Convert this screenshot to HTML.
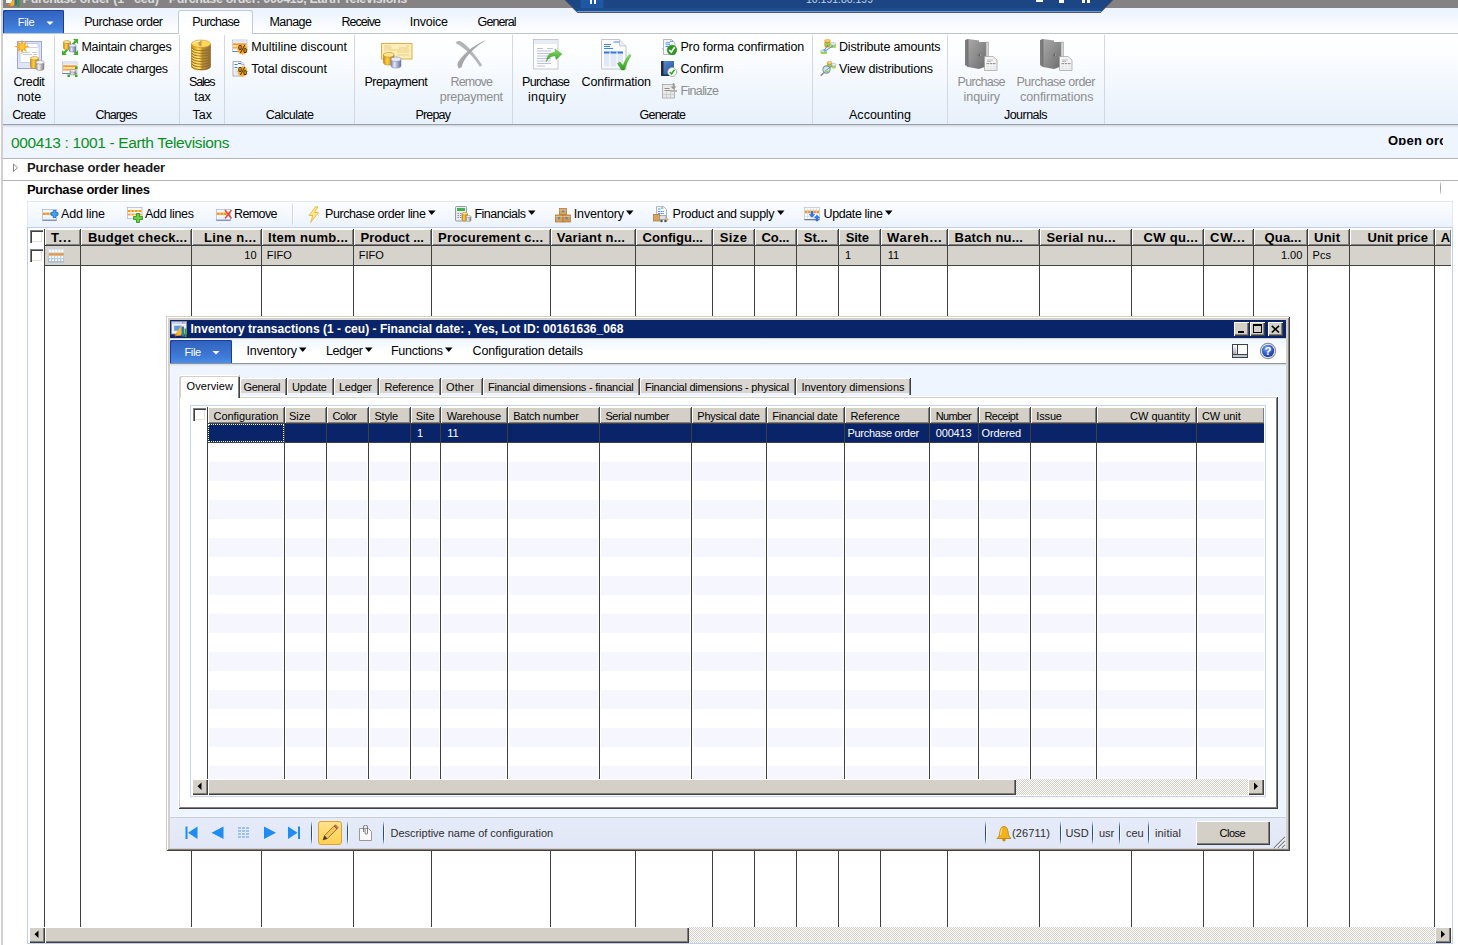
<!DOCTYPE html>
<html><head><meta charset="utf-8"><title>Purchase order</title>
<style>
html,body{margin:0;padding:0;background:#fff;}
body{width:1458px;height:945px;overflow:hidden;font-family:"Liberation Sans",sans-serif;}
#root{position:relative;width:1458px;height:945px;overflow:hidden;background:#fff;}
#root div,#root span.t,#root svg{position:absolute;}
span.t{white-space:nowrap;display:block;}
.clip{overflow:hidden;}
.hc{background:#d4d0c8;box-shadow:inset 1px 1px 0 #fff, inset -1px -1px 0 #808080;}
.chk{background:#fff;box-shadow:inset 1px 1px 0 #808080, inset 2px 2px 0 #404040, inset -1px -1px 0 #fff, inset -2px -2px 0 #e6e3dd;}
.dither{background:repeating-conic-gradient(#ffffff 0% 25%, #d4d0c8 0% 50%) 0 0/2px 2px;}
.sbtn{background:#d4d0c8;box-shadow:inset 1px 1px 0 #fff, inset -1px -1px 0 #404040, inset -2px -2px 0 #808080;}

</style></head>
<body>
<div id="root">
<div style="left:0px;top:0px;width:1458px;height:8px;background:#858283;"></div>
<div class="clip" style="left:0;top:0;width:560px;height:8px;">
<span id="t0" class="t" style="left:22.6px;top:-8.9px;height:16.5px;line-height:16.5px;font-size:12.5px;font-weight:700;color:#dcdcdc;letter-spacing:-0.3px;">Purchase order (1 - ceu) - Purchase order: 000413, Earth Televisions</span>
</div>
<div style="left:6px;top:0px;width:6px;height:3px;background:#f4f6fa;"></div>
<svg style="left:7px;top:0" width="13" height="8"><polygon points="1,6 3,3 6,0 8,0 8,5 3,6.500" fill="#f4b21a"/><polygon points="1,6.500 4,4 3,6.800" fill="#e8481a"/><rect x="7.500" y="0" width="2.500" height="5.500" fill="#2a6ab0"/><rect x="10.500" y="0" width="2" height="7" fill="#3f962a"/></svg>
<div style="left:0px;top:8px;width:1458px;height:26px;background:linear-gradient(#eaf2fd 0%,#f6faff 55%,#ffffff 100%);"></div>
<div style="left:0px;top:34px;width:1458px;height:90px;background:linear-gradient(#ffffff 0%,#fbfdff 25%,#f0f6fd 65%,#e7f0fb 100%);"></div>
<div style="left:0px;top:33px;width:1458px;height:1px;background:#bcc4d0;"></div>
<div style="left:0px;top:124px;width:1458px;height:1px;background:#9aa0a8;"></div>
<div style="left:0px;top:125px;width:1458px;height:3px;background:linear-gradient(#cfd5dd,#e6ecf5 60%,#eef5fe);"></div>
<div style="left:0px;top:0px;width:1px;height:945px;background:#fff;"></div>
<div style="left:1px;top:0px;width:2px;height:945px;background:#d1d0ce;"></div>
<svg style="left:560px;top:0" width="560" height="14" viewBox="0 0 560 14"><polygon points="4.500,0 553.500,0 540.500,13 17.500,13" fill="#55555a"/><polygon points="5.500,0 552.500,0 540.500,12 17.500,12" fill="#1b4683"/><polygon points="14,8 544,8 541,11 17,11" fill="#1e4c8c"/><rect x="21" y="0" width="22" height="7.500" fill="#1d56a2" stroke="#2a62ae" stroke-width=".6"/><polygon points="16.500,11 541.500,11 540.500,12 17.500,12" fill="#6a9cdc"/></svg>
<div class="clip" style="left:560px;top:0;width:560px;height:12px;">
<span id="t1" class="t" style="left:246px;top:-7.8px;height:14.5px;line-height:14.5px;font-size:10.5px;font-weight:400;color:#c4d2e8;letter-spacing:-0.01px;">10.191.80.199</span>
</div>
<div style="left:590px;top:0px;width:2px;height:4px;background:#fff;"></div>
<div style="left:594px;top:0px;width:2px;height:4px;background:#fff;"></div>
<div style="left:1036px;top:0px;width:7px;height:2px;background:#fff;"></div>
<div style="left:1059px;top:0px;width:5px;height:3px;background:#fff;"></div>
<div style="left:1082px;top:0px;width:3px;height:3px;background:#fff;"></div>
<div style="left:1087px;top:0px;width:3px;height:3px;background:#fff;"></div>
<div style="left:3px;top:10px;width:61px;height:23px;border-radius:2px 2px 0 0;background:linear-gradient(#2f62bf 0%,#3a70cc 45%,#3f7cd8 75%,#4a8ee8 100%);box-shadow:inset 1px 1px 0 0 #1a3c9e, inset -1px 0 0 0 #1a3c9e;"></div>
<span id="t2" class="t" style="left:17.8px;top:14.7px;height:15px;line-height:15px;font-size:11px;font-weight:400;color:#fff;letter-spacing:-0.34px;">File</span>
<svg style="left:44px;top:20px" width="12" height="6"><polygon points="2.5,1.5 9.5,1.5 6,5" fill="#fff"/></svg>
<div style="left:178px;top:10px;width:75px;height:24px;background:linear-gradient(#fafcff,#ffffff);border:1px solid #c3cad5;border-bottom:none;border-radius:3px 3px 0 0;box-sizing:border-box;"></div>
<span id="t3" class="t" style="left:84.3px;top:14.1px;height:16.5px;line-height:16.5px;font-size:12.5px;font-weight:400;color:#000;letter-spacing:-0.52px;">Purchase order</span>
<span id="t4" class="t" style="left:192.3px;top:14.1px;height:16.5px;line-height:16.5px;font-size:12.5px;font-weight:400;color:#000;letter-spacing:-0.73px;">Purchase</span>
<span id="t5" class="t" style="left:269.4px;top:14.1px;height:16.5px;line-height:16.5px;font-size:12.5px;font-weight:400;color:#000;letter-spacing:-0.52px;">Manage</span>
<span id="t6" class="t" style="left:341.4px;top:14.1px;height:16.5px;line-height:16.5px;font-size:12.5px;font-weight:400;color:#000;letter-spacing:-0.93px;">Receive</span>
<span id="t7" class="t" style="left:409.7px;top:14.1px;height:16.5px;line-height:16.5px;font-size:12.5px;font-weight:400;color:#000;letter-spacing:-0.22px;">Invoice</span>
<span id="t8" class="t" style="left:477.6px;top:14.1px;height:16.5px;line-height:16.5px;font-size:12.5px;font-weight:400;color:#000;letter-spacing:-0.93px;">General</span>
<div style="left:54px;top:35px;width:1px;height:89px;background:#d3d8e0;"></div>
<div style="left:179px;top:35px;width:1px;height:89px;background:#d3d8e0;"></div>
<div style="left:224px;top:35px;width:1px;height:89px;background:#d3d8e0;"></div>
<div style="left:354px;top:35px;width:1px;height:89px;background:#d3d8e0;"></div>
<div style="left:512px;top:35px;width:1px;height:89px;background:#d3d8e0;"></div>
<div style="left:812px;top:35px;width:1px;height:89px;background:#d3d8e0;"></div>
<div style="left:947px;top:35px;width:1px;height:89px;background:#d3d8e0;"></div>
<div style="left:1104px;top:35px;width:1px;height:89px;background:#d3d8e0;"></div>
<span id="t9" class="t" style="left:12.3px;top:106.8px;height:16.5px;line-height:16.5px;font-size:12.5px;font-weight:400;color:#000;letter-spacing:-0.77px;">Create</span>
<span id="t10" class="t" style="left:95.5px;top:106.8px;height:16.5px;line-height:16.5px;font-size:12.5px;font-weight:400;color:#000;letter-spacing:-0.89px;">Charges</span>
<span id="t11" class="t" style="left:192.6px;top:106.8px;height:16.5px;line-height:16.5px;font-size:12.5px;font-weight:400;color:#000;letter-spacing:0px;">Tax</span>
<span id="t12" class="t" style="left:265.7px;top:106.8px;height:16.5px;line-height:16.5px;font-size:12.5px;font-weight:400;color:#000;letter-spacing:-0.48px;">Calculate</span>
<span id="t13" class="t" style="left:415.5px;top:106.8px;height:16.5px;line-height:16.5px;font-size:12.5px;font-weight:400;color:#000;letter-spacing:-0.82px;">Prepay</span>
<span id="t14" class="t" style="left:639.6px;top:106.8px;height:16.5px;line-height:16.5px;font-size:12.5px;font-weight:400;color:#000;letter-spacing:-0.82px;">Generate</span>
<span id="t15" class="t" style="left:849px;top:106.8px;height:16.5px;line-height:16.5px;font-size:12.5px;font-weight:400;color:#000;letter-spacing:0.02px;">Accounting</span>
<span id="t16" class="t" style="left:1004px;top:106.8px;height:16.5px;line-height:16.5px;font-size:12.5px;font-weight:400;color:#000;letter-spacing:-0.54px;">Journals</span>
<span id="t17" class="t" style="left:13.5px;top:73.8px;height:16.5px;line-height:16.5px;font-size:12.5px;font-weight:400;color:#000;letter-spacing:-0.41px;">Credit</span>
<span id="t18" class="t" style="left:16.9px;top:88.8px;height:16.5px;line-height:16.5px;font-size:12.5px;font-weight:400;color:#000;letter-spacing:0px;">note</span>
<span id="t19" class="t" style="left:189px;top:73.8px;height:16.5px;line-height:16.5px;font-size:12.5px;font-weight:400;color:#000;letter-spacing:-1.2px;">Sales</span>
<span id="t20" class="t" style="left:194.2px;top:88.8px;height:16.5px;line-height:16.5px;font-size:12.5px;font-weight:400;color:#000;letter-spacing:0px;">tax</span>
<span id="t21" class="t" style="left:364.4px;top:73.8px;height:16.5px;line-height:16.5px;font-size:12.5px;font-weight:400;color:#000;letter-spacing:-0.45px;">Prepayment</span>
<span id="t22" class="t" style="left:450.5px;top:73.8px;height:16.5px;line-height:16.5px;font-size:12.5px;font-weight:400;color:#8d8d8d;letter-spacing:-0.81px;">Remove</span>
<span id="t23" class="t" style="left:439.8px;top:88.8px;height:16.5px;line-height:16.5px;font-size:12.5px;font-weight:400;color:#8d8d8d;letter-spacing:-0.31px;">prepayment</span>
<span id="t24" class="t" style="left:522px;top:73.8px;height:16.5px;line-height:16.5px;font-size:12.5px;font-weight:400;color:#000;letter-spacing:-0.69px;">Purchase</span>
<span id="t25" class="t" style="left:528px;top:88.8px;height:16.5px;line-height:16.5px;font-size:12.5px;font-weight:400;color:#000;letter-spacing:0.2px;">inquiry</span>
<span id="t26" class="t" style="left:581.5px;top:73.8px;height:16.5px;line-height:16.5px;font-size:12.5px;font-weight:400;color:#000;letter-spacing:-0.12px;">Confirmation</span>
<span id="t27" class="t" style="left:957.5px;top:73.8px;height:16.5px;line-height:16.5px;font-size:12.5px;font-weight:400;color:#8d8d8d;letter-spacing:-0.69px;">Purchase</span>
<span id="t28" class="t" style="left:963.5px;top:88.8px;height:16.5px;line-height:16.5px;font-size:12.5px;font-weight:400;color:#8d8d8d;letter-spacing:-0.05px;">inquiry</span>
<span id="t29" class="t" style="left:1016.5px;top:73.8px;height:16.5px;line-height:16.5px;font-size:12.5px;font-weight:400;color:#8d8d8d;letter-spacing:-0.5px;">Purchase order</span>
<span id="t30" class="t" style="left:1020px;top:88.8px;height:16.5px;line-height:16.5px;font-size:12.5px;font-weight:400;color:#8d8d8d;letter-spacing:-0.07px;">confirmations</span>
<span id="t31" class="t" style="left:81.5px;top:38.8px;height:16.5px;line-height:16.5px;font-size:12.5px;font-weight:400;color:#000;letter-spacing:-0.33px;">Maintain charges</span>
<span id="t32" class="t" style="left:81.5px;top:60.8px;height:16.5px;line-height:16.5px;font-size:12.5px;font-weight:400;color:#000;letter-spacing:-0.39px;">Allocate charges</span>
<span id="t33" class="t" style="left:251.3px;top:38.8px;height:16.5px;line-height:16.5px;font-size:12.5px;font-weight:400;color:#000;letter-spacing:-0.01px;">Multiline discount</span>
<span id="t34" class="t" style="left:251.3px;top:60.8px;height:16.5px;line-height:16.5px;font-size:12.5px;font-weight:400;color:#000;letter-spacing:-0.06px;">Total discount</span>
<span id="t35" class="t" style="left:680.4px;top:38.8px;height:16.5px;line-height:16.5px;font-size:12.5px;font-weight:400;color:#000;letter-spacing:-0.12px;">Pro forma confirmation</span>
<span id="t36" class="t" style="left:680.4px;top:60.8px;height:16.5px;line-height:16.5px;font-size:12.5px;font-weight:400;color:#000;letter-spacing:-0.09px;">Confirm</span>
<span id="t37" class="t" style="left:680.4px;top:82.8px;height:16.5px;line-height:16.5px;font-size:12.5px;font-weight:400;color:#8d8d8d;letter-spacing:-0.64px;">Finalize</span>
<span id="t38" class="t" style="left:839px;top:38.8px;height:16.5px;line-height:16.5px;font-size:12.5px;font-weight:400;color:#000;letter-spacing:-0.16px;">Distribute amounts</span>
<span id="t39" class="t" style="left:839px;top:60.8px;height:16.5px;line-height:16.5px;font-size:12.5px;font-weight:400;color:#000;letter-spacing:-0.18px;">View distributions</span>
<svg width="0" height="0" style="left:0;top:0"><defs>
<linearGradient id="gold" x1="0" x2="1" y1="0" y2="0"><stop offset="0" stop-color="#c98a14"/><stop offset=".35" stop-color="#ffd24a"/><stop offset=".6" stop-color="#e9a820"/><stop offset="1" stop-color="#a8781c"/></linearGradient>
<linearGradient id="silv" x1="0" x2="1" y1="0" y2="0"><stop offset="0" stop-color="#9a9a9a"/><stop offset=".35" stop-color="#f2f2f2"/><stop offset=".7" stop-color="#b0b0b0"/><stop offset="1" stop-color="#7e7e7e"/></linearGradient>
<linearGradient id="silvb" x1="0" x2="1" y1="0" y2="0"><stop offset="0" stop-color="#8088b0"/><stop offset=".35" stop-color="#e4e8f6"/><stop offset=".7" stop-color="#9aa2c8"/><stop offset="1" stop-color="#6a72a0"/></linearGradient>
<linearGradient id="grn" x1="0" x2="0" y1="0" y2="1"><stop offset="0" stop-color="#8be06a"/><stop offset="1" stop-color="#2f9a1a"/></linearGradient>
<linearGradient id="bk" x1="0" x2="1" y1="0" y2="1"><stop offset="0" stop-color="#a9a9a9"/><stop offset=".5" stop-color="#8c8c8c"/><stop offset="1" stop-color="#6b6b6b"/></linearGradient>
<linearGradient id="bluebk" x1="0" x2="1" y1="0" y2="1"><stop offset="0" stop-color="#5b8fd6"/><stop offset="1" stop-color="#1f4f90"/></linearGradient>
<radialGradient id="helpg" cx=".4" cy=".3" r=".8"><stop offset="0" stop-color="#7ea6ee"/><stop offset=".6" stop-color="#2b56c4"/><stop offset="1" stop-color="#16348c"/></radialGradient>
</defs></svg>
<svg style="left:13px;top:38px" width="34" height="34" viewBox="0 0 34 34"><rect x="4.500" y="3.500" width="24" height="27" fill="#dfe4f7" stroke="#9aa6d8"/><rect x="7" y="6" width="19" height="18.500" fill="#fff" stroke="#aeb7e0" stroke-width=".6"/><rect x="14.500" y="5.500" width="10.500" height="4" fill="#fff" stroke="#aeb7e0" stroke-width=".6"/><path d="M10 14.500h7M19 14.500h5M10 16.500h9M20 16.500h4" stroke="#b8bcd0" stroke-width=".8"/><g fill="#f6a81c"><polygon points="9,1 10.3,6 14,3 12.2,7.6 17,8.5 12.2,10 14,14.5 10.3,11.5 9,17 7.7,11.5 3.5,14.5 5.8,10 1,8.5 5.8,7.6 3.5,3 7.7,6"/></g><circle cx="9" cy="8.6" r="2.6" fill="#ffc93a"/><path d="M17.5,20.26 v8.48 a4.0,1.76 0 0 0 8,0 v-8.48 z" fill="url(#gold)" stroke="#a8781c" stroke-width=".5"/><ellipse cx="21.5" cy="20.26" rx="4.0" ry="1.76" fill="#ffe58a" stroke="#a8781c" stroke-width=".5"/><path d="M23,24.26 v6.48 a4.0,1.76 0 0 0 8,0 v-6.48 z" fill="url(#silv)" stroke="#8a8a8a" stroke-width=".5"/><ellipse cx="27.0" cy="24.26" rx="4.0" ry="1.76" fill="#f4f4f4" stroke="#8a8a8a" stroke-width=".5"/></svg>
<svg style="left:62px;top:39px" width="16" height="16" viewBox="0 0 16 16"><g fill="#3fae2a"><polygon points="16,0 16,5 14.3,3.3 11.5,6 10,4.5 12.7,1.7 11,0"/><polygon points="0,16 0,11 1.7,12.7 4.5,10 6,11.5 3.3,14.3 5,16"/><polygon points="16,16 11,16 12.7,14.3 10,11.5 11.5,10 14.3,12.7 16,11"/></g><path d="M1.5,3.04 v5.92 a3.5,1.54 0 0 0 7,0 v-5.92 z" fill="url(#gold)" stroke="#a8781c" stroke-width=".5"/><ellipse cx="5.0" cy="3.04" rx="3.5" ry="1.54" fill="#ffe58a" stroke="#a8781c" stroke-width=".5"/><path d="M7,6.54 v4.92 a3.5,1.54 0 0 0 7,0 v-4.92 z" fill="url(#silvb)" stroke="#7078a4" stroke-width=".5"/><ellipse cx="10.5" cy="6.54" rx="3.5" ry="1.54" fill="#e8ebf8" stroke="#7078a4" stroke-width=".5"/></svg>
<svg style="left:62px;top:61px" width="16" height="16" viewBox="0 0 16 16"><rect x=".5" y="1" width="14.5" height="11.5" fill="#f4f6fc" stroke="#9fb0d4" stroke-width=".6"/><rect x="1" y="1.3" width="13.5" height="2.2" fill="#dfe6f6"/><rect x="1" y="4.3" width="13.5" height="2" fill="#f79a1a"/><rect x="1" y="7.6" width="13.5" height="2" fill="#f9a93a"/><rect x=".5" y="12" width="14.5" height="1" fill="#6f86b8"/><path d="M8,9.82 v2.86 a3.0,1.32 0 0 0 6,0 v-2.86 z" fill="url(#silv)" stroke="#808080" stroke-width=".5"/><ellipse cx="11.0" cy="9.82" rx="3.0" ry="1.32" fill="#f0f0f0" stroke="#808080" stroke-width=".5"/><g fill="#33b022"><rect x="13" y="5.5" width="2.5" height="2.5"/><rect x="5.5" y="13.5" width="2.5" height="2.5"/><rect x="13" y="13.5" width="2.5" height="2.5"/></g></svg>
<svg style="left:191px;top:39px" width="20" height="33" viewBox="0 0 20 33"><path d="M0.5,5 v22.500 a9.500,3.600 0 0 0 19,0 v-22.500 z" fill="url(#gold)" stroke="#9b6c14" stroke-width=".5"/><path d="M0.600,8.5 a9.400,3.200 0 0 0 18.800,0" fill="none" stroke="#8a5e10" stroke-width=".9" opacity=".8"/><path d="M1.200,10.0 a9.400,3.200 0 0 0 8,2.900" fill="none" stroke="#fff0a0" stroke-width=".9" opacity=".9"/><path d="M0.600,11.2 a9.400,3.200 0 0 0 18.800,0" fill="none" stroke="#8a5e10" stroke-width=".9" opacity=".8"/><path d="M1.200,12.7 a9.400,3.200 0 0 0 8,2.900" fill="none" stroke="#fff0a0" stroke-width=".9" opacity=".9"/><path d="M0.600,13.9 a9.400,3.200 0 0 0 18.800,0" fill="none" stroke="#8a5e10" stroke-width=".9" opacity=".8"/><path d="M1.200,15.4 a9.400,3.200 0 0 0 8,2.900" fill="none" stroke="#fff0a0" stroke-width=".9" opacity=".9"/><path d="M0.600,16.6 a9.400,3.200 0 0 0 18.800,0" fill="none" stroke="#8a5e10" stroke-width=".9" opacity=".8"/><path d="M1.200,18.1 a9.400,3.200 0 0 0 8,2.900" fill="none" stroke="#fff0a0" stroke-width=".9" opacity=".9"/><path d="M0.600,19.3 a9.400,3.200 0 0 0 18.800,0" fill="none" stroke="#8a5e10" stroke-width=".9" opacity=".8"/><path d="M1.200,20.8 a9.400,3.200 0 0 0 8,2.900" fill="none" stroke="#fff0a0" stroke-width=".9" opacity=".9"/><path d="M0.600,22.0 a9.400,3.200 0 0 0 18.800,0" fill="none" stroke="#8a5e10" stroke-width=".9" opacity=".8"/><path d="M1.200,23.5 a9.400,3.200 0 0 0 8,2.900" fill="none" stroke="#fff0a0" stroke-width=".9" opacity=".9"/><path d="M0.600,24.700000000000003 a9.400,3.200 0 0 0 18.800,0" fill="none" stroke="#8a5e10" stroke-width=".9" opacity=".8"/><path d="M1.200,26.200000000000003 a9.400,3.200 0 0 0 8,2.900" fill="none" stroke="#fff0a0" stroke-width=".9" opacity=".9"/><path d="M0.600,27.400000000000002 a9.400,3.200 0 0 0 18.800,0" fill="none" stroke="#8a5e10" stroke-width=".9" opacity=".8"/><path d="M1.200,28.900000000000002 a9.400,3.200 0 0 0 8,2.900" fill="none" stroke="#fff0a0" stroke-width=".9" opacity=".9"/><path d="M10.500,8 v22.900 a9.500,3.600 0 0 0 9,-3.400 v-22 z" fill="#7a6a58" opacity=".42"/><ellipse cx="10" cy="4.800" rx="9.500" ry="3.800" fill="#ffd65a" stroke="#b8861c" stroke-width=".5"/><path d="M7.500,3 l3,-1.500 v6 l-3,-1.500z" fill="#a89060" opacity=".8"/><path d="M2,4.500 a8,2.800 0 0 1 7,-2.500" stroke="#fff4c0" stroke-width="1" fill="none"/></svg>
<svg style="left:232px;top:39px" width="17" height="17" viewBox="0 0 17 17"><rect x=".5" y="1" width="14.5" height="11.5" fill="#f4f6fc" stroke="#9fb0d4" stroke-width=".6"/><rect x="1" y="1.3" width="13.5" height="2.2" fill="#dfe6f6"/><rect x="1" y="4.3" width="13.5" height="2" fill="#f79a1a"/><rect x="1" y="7.6" width="13.5" height="2" fill="#f9a93a"/><rect x=".5" y="12" width="14.5" height="1" fill="#6f86b8"/><polygon points="16.3,10.5 14.5,11.6 15.5,13.4 13.5,13.5 13.4,15.5 11.6,14.5 10.5,16.3 9.4,14.5 7.6,15.5 7.5,13.5 5.5,13.4 6.5,11.6 4.7,10.5 6.5,9.4 5.5,7.6 7.5,7.5 7.6,5.5 9.4,6.5 10.5,4.7 11.6,6.5 13.4,5.5 13.5,7.5 15.5,7.6 14.5,9.4" fill="#fbab24"/><text x="10.5" y="14.0" font-size="10" font-weight="400" text-anchor="middle" font-family="Liberation Sans, sans-serif" fill="#000">%</text></svg>
<svg style="left:232px;top:61px" width="17" height="17" viewBox="0 0 17 17"><path d="M1,.5 h8 l3,3 v11.5 h-11 z" fill="#fbfbfd" stroke="#8a8a92" stroke-width=".7"/><path d="M9,.5 v3 h3" fill="#e8e8ee" stroke="#8a8a92" stroke-width=".5"/><path d="M2.5 3.5h3M6 2.5h3M2.5 6.5h3" stroke="#2f7fe0" stroke-width="1"/><rect x="2.5" y="8" width="4" height="5.5" fill="#dfe6f6"/><polygon points="16.3,10.5 14.5,11.6 15.5,13.4 13.5,13.5 13.4,15.5 11.6,14.5 10.5,16.3 9.4,14.5 7.6,15.5 7.5,13.5 5.5,13.4 6.5,11.6 4.7,10.5 6.5,9.4 5.5,7.6 7.5,7.5 7.6,5.5 9.4,6.5 10.5,4.7 11.6,6.5 13.4,5.5 13.5,7.5 15.5,7.6 14.5,9.4" fill="#fbab24"/><text x="10.5" y="14.0" font-size="10" font-weight="400" text-anchor="middle" font-family="Liberation Sans, sans-serif" fill="#000">%</text></svg>
<svg style="left:381px;top:43px" width="32" height="26" viewBox="0 0 32 26"><rect x=".5" y=".5" width="30.5" height="15.5" fill="#fdeeb8" stroke="#dcae4e"/><path d="M3 3h7M25 3h3M3 5h8M18 5h10M3 7h3M7 7h14M22 7h6M16 9h12M16 12h12" stroke="#d9b96a" stroke-width=".6"/><path d="M2.5,11.81 v7.88 a5.25,2.31 0 0 0 10.5,0 v-7.88 z" fill="url(#gold)" stroke="#a8781c" stroke-width=".5"/><ellipse cx="7.75" cy="11.81" rx="5.25" ry="2.31" fill="#ffe58a" stroke="#a8781c" stroke-width=".5"/><path d="M10,16.2 v6.6 a5.0,2.2 0 0 0 10,0 v-6.6 z" fill="url(#silvb)" stroke="#7078a4" stroke-width=".5"/><ellipse cx="15.0" cy="16.2" rx="5.0" ry="2.2" fill="#e8ebf8" stroke="#7078a4" stroke-width=".5"/></svg>
<svg style="left:455px;top:39.5px" width="32" height="29" viewBox="0 0 32 29"><path d="M0.5,3 C2,1 4,0.5 6,1.5 C12,5 20,14 27,25 L25,27 C19,17 10,8 0.5,3 Z" fill="#b5b5b5"/><path d="M31,0.3 C22,3 10,12 3,22 C2,25 2.5,27 4,28.5 L7,27 C7,22 16,9 31,0.3 Z" fill="#a8a8a8"/></svg>
<svg style="left:533px;top:39px" width="30" height="31" viewBox="0 0 30 31"><rect x=".5" y=".5" width="24.5" height="29.5" fill="#fdfdfe" stroke="#b9bcc6" stroke-width=".8"/><rect x="1" y="1" width="23.5" height="4" fill="#e6ebf8"/><path d="M4 9.5h6M14 9.5h6M4 12h14M4 14.500h14M4 17h14M4 19.500h14M4 22h14M4 24.5h14M4 27h8" stroke="#aab4dc" stroke-width=".8"/><path d="M13.5,22.500 C14,16 17,13.500 22,13.500 L22,10 L29,15 L23,20.500 L22.500,17 C18,17 15.500,18.500 13.500,22.500 Z" fill="url(#grn)" stroke="#3a9a26" stroke-width=".4"/></svg>
<svg style="left:601px;top:39px" width="31" height="32" viewBox="0 0 31 32"><path d="M.5,.5 h18 l6.500,6.500 v23 h-24.500 z" fill="#fbfbfd" stroke="#b4b6be" stroke-width=".8"/><path d="M18.500,.5 v6.500 h6.500" fill="#ececf2" stroke="#b4b6be" stroke-width=".6"/><path d="M12.5 3h6M3 5.500h7M3 7.500h6M3 9.500h9" stroke="#3f86e6" stroke-width="1"/><rect x="3" y="12.500" width="19" height="15" fill="#e2e8f8"/><rect x="3" y="12.500" width="19" height="2" fill="#2f7ae0"/><path d="M9 12.500v15M16 12.500v15" stroke="#fff" stroke-width="1"/><path d="M16.500,24.500 l2.500,-1.500 l3,3.500 c2,-5 4,-8.500 6.500,-11 l1.500,1 c-3,4.500 -5,9 -6.500,14.500 l-3,0 z" fill="url(#grn)" stroke="#2e9a1a" stroke-width=".4"/></svg>
<svg style="left:662px;top:39px" width="16" height="17" viewBox="0 0 16 17"><path d="M1.500,.5 h8 l3.500,3.500 v11.500 h-11.500 z" fill="#f8f8fb" stroke="#9a9aa4" stroke-width=".7"/><path d="M0,9 l1.500,2" stroke="#9a9aa4" stroke-width=".6"/><path d="M4 3.500h4M8 2.300h3M4 5.500h4M3.500 7.500h3" stroke="#4a90ea" stroke-width="1.100"/><ellipse cx="5.500" cy="4.500" rx="2.500" ry="2" fill="#9cc4f4" opacity=".7"/><circle cx="10" cy="11" r="4.800" fill="#2c9a1c" stroke="#1e7a12" stroke-width=".5"/><path d="M7.300,11 l2,2.300 l3.300,-5" stroke="#fff" stroke-width="1.600" fill="none"/></svg>
<svg style="left:661px;top:61px" width="17" height="17" viewBox="0 0 17 17"><rect x="0" y="0" width="13" height="15" fill="url(#bluebk)"/><rect x="0" y="0" width="2.500" height="15" fill="#2a2a2e"/><rect x="0" y="13.500" width="13" height="1.500" fill="#16325e"/><circle cx="11.200" cy="11" r="4.500" fill="#fff" stroke="#9a9a9a" stroke-width=".8"/><path d="M8.800,11 l1.800,2 l2.800,-4.300" stroke="#2fae1c" stroke-width="1.600" fill="none"/></svg>
<svg style="left:662px;top:83px" width="16" height="17" viewBox="0 0 16 17"><rect x=".5" y="1.500" width="12" height="13.500" fill="#e9e9e9" stroke="#a6a6a6" stroke-width=".8"/><path d="M2.500 5.500h5M2.500 7.500h9" stroke="#8e8e8e" stroke-width="1"/><path d="M4.500 9v6M8.500 9v6M.5 11.500h12" stroke="#c2c2c2" stroke-width=".7"/><path d="M11.500,0 v5" stroke="#9a9a9a" stroke-width="1.500"/><polygon points="8.500,3.500 14.500,3.500 11.500,6.500" fill="#9a9a9a"/><rect x="8" y="7" width="7" height="1.800" fill="#b0b0b0"/></svg>
<svg style="left:820px;top:39px" width="17" height="16" viewBox="0 0 17 16"><rect x="4.5" y="1.5" width="6" height="7" rx="1.500" fill="#e79a1e"/><ellipse cx="7.5" cy="1.8" rx="3.0" ry="1.400" fill="#ffd070" stroke="#b87812" stroke-width=".4"/><rect x="4.500" y="4" width="6" height="2.500" fill="#8fd24a"/><rect x="10.5" y="4.5" width="5.5" height="4.5" rx="1.500" fill="#a4d860"/><ellipse cx="13.25" cy="4.8" rx="2.75" ry="1.400" fill="#ececf4" stroke="#8a8aa0" stroke-width=".4"/><rect x="0.5" y="11.5" width="6.5" height="3.5" rx="1.500" fill="#98d456"/><ellipse cx="3.75" cy="11.8" rx="3.25" ry="1.400" fill="#e6ece0" stroke="#8aa070" stroke-width=".4"/><path d="M3.500,12 L8,6 M4,12.500 L13,7" stroke="#2f8fe6" stroke-width=".9"/></svg>
<svg style="left:820px;top:61px" width="17" height="16" viewBox="0 0 17 16"><rect x="7" y="1.5" width="5" height="5" rx="1.500" fill="#e79a1e"/><ellipse cx="9.5" cy="1.8" rx="2.5" ry="1.400" fill="#ffd070" stroke="#b87812" stroke-width=".4"/><rect x="7" y="3.500" width="5" height="2" fill="#8fd24a"/><rect x="11.5" y="3.5" width="4.5" height="4" rx="1.500" fill="#a4d860"/><ellipse cx="13.75" cy="3.8" rx="2.25" ry="1.400" fill="#ececf4" stroke="#8a8aa0" stroke-width=".4"/><circle cx="6.500" cy="8.500" r="3.600" fill="#cfe6f6" stroke="#8a8e96" stroke-width="1.100"/><path d="M4,11.500 L0.800,14.800" stroke="#8a8a8a" stroke-width="1.600"/><path d="M5,10 L12,5" stroke="#2f8fe6" stroke-width=".7"/><rect x="4.500" y="9.500" width="4" height="1.500" fill="#9ad060"/></svg>
<svg style="left:964.5px;top:39px" width="33" height="32" viewBox="0 0 33 32"><path d="M0,1 L3,0 L3,28 L0,26 Z" fill="#7c7c7c"/><path d="M3,0 L14,1.500 L14,3 L21,3 L21,27.500 L14,30 L3,28 Z" fill="url(#bk)"/><path d="M21,3 h2.500 v22 l-2.500,2.500z" fill="#d6d6d6" stroke="#909090" stroke-width=".5"/><path d="M3,0v28" stroke="#6a6a6a" stroke-width=".7"/><circle cx="15" cy="16" r="2" fill="#9a9a9a" stroke="#6e6e6e" stroke-width=".6"/><path d="M13,16 l2,-1.500v3z" fill="#5e5e5e"/><path d="M19.500,17.500 h8.500 l4,3.500 v10.500 h-12.500 z" fill="#f3f3f3" stroke="#9c9c9c" stroke-width=".7"/><path d="M22 21h6M22 22.500h4" stroke="#a6a6a6" stroke-width=".7"/><rect x="21.500" y="24" width="9" height="6.500" fill="#e4e4e4"/><path d="M21.500 24.500h9" stroke="#9a9a9a" stroke-width="1"/><path d="M24.500 24v6.500M27.500 24v6.500M21.500 26.500h9M21.500 28.500h9" stroke="#fafafa" stroke-width=".6"/></svg>
<svg style="left:1040px;top:39px" width="33" height="32" viewBox="0 0 33 32"><path d="M0,1 L3,0 L3,28 L0,26 Z" fill="#7c7c7c"/><path d="M3,0 L14,1.500 L14,3 L21,3 L21,27.500 L14,30 L3,28 Z" fill="url(#bk)"/><path d="M21,3 h2.500 v22 l-2.500,2.500z" fill="#d6d6d6" stroke="#909090" stroke-width=".5"/><path d="M3,0v28" stroke="#6a6a6a" stroke-width=".7"/><circle cx="15" cy="16" r="2" fill="#9a9a9a" stroke="#6e6e6e" stroke-width=".6"/><path d="M13,16 l2,-1.500v3z" fill="#5e5e5e"/><path d="M19.500,17.500 h8.500 l4,3.500 v10.500 h-12.500 z" fill="#f3f3f3" stroke="#9c9c9c" stroke-width=".7"/><path d="M22 21h6M22 22.500h4" stroke="#a6a6a6" stroke-width=".7"/><rect x="21.500" y="24" width="9" height="6.500" fill="#e4e4e4"/><path d="M21.500 24.500h9" stroke="#9a9a9a" stroke-width="1"/><path d="M24.500 24v6.500M27.500 24v6.500M21.500 26.500h9M21.500 28.500h9" stroke="#fafafa" stroke-width=".6"/></svg>
<div style="left:3px;top:128px;width:1455px;height:30px;background:#eef5fe;"></div>
<div style="left:3px;top:158px;width:1455px;height:1px;background:#b4b4b4;"></div>
<span id="t40" class="t" style="left:11px;top:132.8px;height:19.5px;line-height:19.5px;font-size:15.5px;font-weight:400;color:#0a8f1c;letter-spacing:-0.35px;">000413 : 1001 - Earth Televisions</span>
<div class="clip" style="left:1380px;top:129px;width:63px;height:16px;">
<span id="t41" class="t" style="left:8px;top:3.0px;height:17px;line-height:17px;font-size:13px;font-weight:700;color:#000;letter-spacing:0.2px;">Open orc</span>
</div>
<svg style="left:12px;top:162px" width="8" height="12"><polygon points="1.500,2 5.500,5.750 1.500,9.500" fill="#fff" stroke="#8a8a8a" stroke-width="1"/></svg>
<span id="t42" class="t" style="left:27px;top:159.0px;height:17px;line-height:17px;font-size:13px;font-weight:700;color:#1a1a1a;letter-spacing:-0.18px;">Purchase order header</span>
<div style="left:3px;top:180px;width:1455px;height:1px;background:#b4b4b4;"></div>
<span id="t43" class="t" style="left:27px;top:181.0px;height:17px;line-height:17px;font-size:13px;font-weight:700;color:#000;letter-spacing:-0.3px;">Purchase order lines</span>
<div style="left:1440px;top:182px;width:1px;height:12px;background:linear-gradient(#d8d8d8,#9a9a9a 50%,#d8d8d8);"></div>
<div style="left:27px;top:201px;width:1426px;height:27px;background:linear-gradient(#fbfdff,#f4f8fe 55%,#ebf2fd);border:1px solid #dfe8f7;box-sizing:border-box;"></div>
<div style="left:292px;top:204px;width:1px;height:21px;background:#d0d8e6;"></div>
<div style="left:293px;top:204px;width:1px;height:21px;background:#fff;"></div>
<span id="t44" class="t" style="left:61px;top:205.8px;height:16.5px;line-height:16.5px;font-size:12.5px;font-weight:400;color:#000;letter-spacing:-0.17px;">Add line</span>
<span id="t45" class="t" style="left:145px;top:205.8px;height:16.5px;line-height:16.5px;font-size:12.5px;font-weight:400;color:#000;letter-spacing:-0.3px;">Add lines</span>
<span id="t46" class="t" style="left:234px;top:205.8px;height:16.5px;line-height:16.5px;font-size:12.5px;font-weight:400;color:#000;letter-spacing:-0.61px;">Remove</span>
<span id="t47" class="t" style="left:325px;top:205.8px;height:16.5px;line-height:16.5px;font-size:12.5px;font-weight:400;color:#000;letter-spacing:-0.42px;">Purchase order line</span>
<span id="t48" class="t" style="left:474.5px;top:205.8px;height:16.5px;line-height:16.5px;font-size:12.5px;font-weight:400;color:#000;letter-spacing:-0.53px;">Financials</span>
<span id="t49" class="t" style="left:573.8px;top:205.8px;height:16.5px;line-height:16.5px;font-size:12.5px;font-weight:400;color:#000;letter-spacing:-0.15px;">Inventory</span>
<span id="t50" class="t" style="left:672.6px;top:205.8px;height:16.5px;line-height:16.5px;font-size:12.5px;font-weight:400;color:#000;letter-spacing:-0.3px;">Product and supply</span>
<span id="t51" class="t" style="left:823.5px;top:205.8px;height:16.5px;line-height:16.5px;font-size:12.5px;font-weight:400;color:#000;letter-spacing:-0.38px;">Update line</span>
<svg style="left:427.5px;top:210px" width="8" height="6"><polygon points="0,.5 7.500,.5 3.750,5" fill="#000"/></svg>
<svg style="left:527.5px;top:210px" width="8" height="6"><polygon points="0,.5 7.500,.5 3.750,5" fill="#000"/></svg>
<svg style="left:626px;top:210px" width="8" height="6"><polygon points="0,.5 7.500,.5 3.750,5" fill="#000"/></svg>
<svg style="left:776.5px;top:210px" width="8" height="6"><polygon points="0,.5 7.500,.5 3.750,5" fill="#000"/></svg>
<svg style="left:885px;top:210px" width="8" height="6"><polygon points="0,.5 7.500,.5 3.750,5" fill="#000"/></svg>
<svg style="left:42px;top:208.5px" width="17" height="13" viewBox="0 0 17 13"><rect x=".5" y=".5" width="14" height="11" fill="#fbfcff" stroke="#a9b8dc" stroke-width=".8"/><rect x="1" y="3.500" width="13" height="2.500" fill="#f79a1a"/><path d="M4 .5v11M7.500 .5v11M11 .5v11M.5 8.500h14" stroke="#dfe5f4" stroke-width=".6"/><rect x=".5" y="10.500" width="14" height="1.500" fill="#7f93c4"/><path d="M11.200 1.500h2.600v2.200h2.200v2.600h-2.200v2.200h-2.600v-2.200h-2.200v-2.600h2.200z" fill="#3fa8f4" stroke="#1a6fd0" stroke-width=".9" stroke-linejoin="round"/></svg>
<svg style="left:126.5px;top:206.5px" width="17" height="17" viewBox="0 0 17 17"><rect x=".5" y=".5" width="14.500" height="11" fill="#fbfcff" stroke="#a9b8dc" stroke-width=".8"/><rect x="1" y="3" width="13.500" height="2" fill="#f79a1a"/><rect x="1" y="6.500" width="13.500" height="2" fill="#f9a93a"/><path d="M4 .5v11M7.500 .5v11M11 .5v11" stroke="#eef2fb" stroke-width=".7"/><path d="M9.500 6.500h3v3h3v3h-3v3h-3v-3h-3v-3h3z" fill="#6bd048" stroke="#2a8a16" stroke-width=".8"/></svg>
<svg style="left:215.5px;top:208.5px" width="17" height="13" viewBox="0 0 17 13"><rect x=".5" y=".5" width="14" height="11" fill="#fbfcff" stroke="#a9b8dc" stroke-width=".8"/><rect x="1" y="3.500" width="13" height="2.500" fill="#f79a1a"/><path d="M4 .5v11M7.500 .5v11M11 .5v11M.5 8.500h14" stroke="#dfe5f4" stroke-width=".6"/><rect x=".5" y="10.500" width="14" height="1.500" fill="#7f93c4"/><path d="M9,1 L15.500,9.500 M15.500,1 L9,9.500" stroke="#e4483a" stroke-width="1.400"/></svg>
<svg style="left:307px;top:205.5px" width="14" height="18" viewBox="0 0 14 18"><path d="M8.500,.8 L2,9.500 L6,9.500 L3.500,16.500 L11.500,6.500 L7.500,6.500 L11,.8 Z" fill="#ffe88e" stroke="#e4ae2a" stroke-width=".8"/></svg>
<svg style="left:455px;top:206px" width="17" height="17" viewBox="0 0 17 17"><rect x=".5" y=".5" width="11" height="14.500" rx="1" fill="#e8eaee" stroke="#7e8694" stroke-width=".8"/><rect x="2" y="2" width="8" height="3" fill="#46b052"/><path d="M2.500 7.500h7M2.500 9.500h7M2.500 11.500h7" stroke="#8a92a0" stroke-width="1.200" stroke-dasharray="1.500,1"/><path d="M7,7.71 v6.08 a2.75,1.21 0 0 0 5.5,0 v-6.08 z" fill="url(#gold)" stroke="#a8781c" stroke-width=".5"/><ellipse cx="9.75" cy="7.71" rx="2.75" ry="1.21" fill="#ffe58a" stroke="#a8781c" stroke-width=".5"/><path d="M11,10.6 v3.8 a2.5,1.1 0 0 0 5,0 v-3.8 z" fill="url(#silv)" stroke="#808080" stroke-width=".5"/><ellipse cx="13.5" cy="10.6" rx="2.5" ry="1.1" fill="#f0f0f0" stroke="#808080" stroke-width=".5"/></svg>
<svg style="left:555px;top:207.5px" width="17" height="16" viewBox="0 0 17 16"><rect x="4.500" y=".5" width="7" height="6.500" fill="#d9a35c" stroke="#a8722e" stroke-width=".7"/><rect x=".5" y="7" width="7.500" height="7" fill="#d9a35c" stroke="#a8722e" stroke-width=".7"/><rect x="8" y="7" width="7.500" height="7" fill="#cf9a54" stroke="#a8722e" stroke-width=".7"/><rect x="7" y="2" width="2.200" height="2.200" fill="#5a86d8"/><rect x="3" y="9" width="2.200" height="2.200" fill="#5a86d8"/><rect x="10.500" y="9" width="2.200" height="2.200" fill="#5a86d8"/><path d="M4.500 2h7M.5 8.500h15" stroke="#e8c48a" stroke-width=".8"/></svg>
<svg style="left:653px;top:206px" width="17" height="17" viewBox="0 0 17 17"><path d="M3.500,.5 h7 l3,3 v9 h-10 z" fill="#f8f8fb" stroke="#9a9aa4" stroke-width=".7"/><path d="M5 3h3M8 2h3M5 5.500h6M5 7.500h6" stroke="#4a90ea" stroke-width="1" stroke-dasharray="2,.6"/><rect x=".5" y="8.500" width="6" height="6.500" fill="#d9a35c" stroke="#a8722e" stroke-width=".7"/><rect x="6.500" y="9.500" width="6.500" height="4" fill="#dcdfe6" stroke="#7e8694" stroke-width=".6"/><circle cx="8.500" cy="15" r="1.300" fill="#555"/><circle cx="12.500" cy="15" r="1.300" fill="#555"/><circle cx="14.500" cy="13.500" r="1" fill="#e8a21a"/></svg>
<svg style="left:804px;top:207px" width="17" height="16" viewBox="0 0 17 16"><rect x=".5" y=".5" width="15" height="12" fill="#fcfdff" stroke="#b4bed8" stroke-width=".7"/><rect x="1" y="3.500" width="14" height="2.500" fill="#f79a1a"/><path d="M3.500 .5v12M6.500 .5v12M9.500 .5v12M12.500 .5v12M.5 3h15M.5 6.500h15M.5 9.500h15" stroke="#d4dae8" stroke-width=".7"/><rect x=".5" y="12" width="15" height="1.300" fill="#66789c"/><path d="M7,4.500 v3 h-1.800 l2.800,3 l2.800,-3 h-1.800 v-3 z" fill="#2f7fe0" stroke="#1a56b0" stroke-width=".4"/><path d="M12,14 v-3 h-1.800 l2.800,-3 l2.800,3 h-1.800 v3 z" fill="#2f7fe0" stroke="#1a56b0" stroke-width=".4"/></svg>
<div style="left:27px;top:227px;width:1426px;height:717px;border:1px solid #bfd0ec;box-sizing:border-box;background:#fff;"></div>
<div style="left:44px;top:229px;width:1407px;height:17px;background:#d6d3cd;"></div>
<div style="left:45px;top:229px;width:35px;height:16px;background:#d6d3cd;box-shadow:inset 1px 1px 0 #fff, inset -1px -1px 0 #808080;"></div>
<div style="left:81px;top:229px;width:110px;height:16px;background:#d6d3cd;box-shadow:inset 1px 1px 0 #fff, inset -1px -1px 0 #808080;"></div>
<div style="left:192px;top:229px;width:69px;height:16px;background:#d6d3cd;box-shadow:inset 1px 1px 0 #fff, inset -1px -1px 0 #808080;"></div>
<div style="left:262px;top:229px;width:91px;height:16px;background:#d6d3cd;box-shadow:inset 1px 1px 0 #fff, inset -1px -1px 0 #808080;"></div>
<div style="left:354px;top:229px;width:77px;height:16px;background:#d6d3cd;box-shadow:inset 1px 1px 0 #fff, inset -1px -1px 0 #808080;"></div>
<div style="left:432px;top:229px;width:118px;height:16px;background:#d6d3cd;box-shadow:inset 1px 1px 0 #fff, inset -1px -1px 0 #808080;"></div>
<div style="left:551px;top:229px;width:84px;height:16px;background:#d6d3cd;box-shadow:inset 1px 1px 0 #fff, inset -1px -1px 0 #808080;"></div>
<div style="left:636px;top:229px;width:76px;height:16px;background:#d6d3cd;box-shadow:inset 1px 1px 0 #fff, inset -1px -1px 0 #808080;"></div>
<div style="left:713px;top:229px;width:41px;height:16px;background:#d6d3cd;box-shadow:inset 1px 1px 0 #fff, inset -1px -1px 0 #808080;"></div>
<div style="left:755px;top:229px;width:41px;height:16px;background:#d6d3cd;box-shadow:inset 1px 1px 0 #fff, inset -1px -1px 0 #808080;"></div>
<div style="left:797px;top:229px;width:41px;height:16px;background:#d6d3cd;box-shadow:inset 1px 1px 0 #fff, inset -1px -1px 0 #808080;"></div>
<div style="left:839px;top:229px;width:41px;height:16px;background:#d6d3cd;box-shadow:inset 1px 1px 0 #fff, inset -1px -1px 0 #808080;"></div>
<div style="left:881px;top:229px;width:66px;height:16px;background:#d6d3cd;box-shadow:inset 1px 1px 0 #fff, inset -1px -1px 0 #808080;"></div>
<div style="left:948px;top:229px;width:91px;height:16px;background:#d6d3cd;box-shadow:inset 1px 1px 0 #fff, inset -1px -1px 0 #808080;"></div>
<div style="left:1040px;top:229px;width:91px;height:16px;background:#d6d3cd;box-shadow:inset 1px 1px 0 #fff, inset -1px -1px 0 #808080;"></div>
<div style="left:1132px;top:229px;width:71px;height:16px;background:#d6d3cd;box-shadow:inset 1px 1px 0 #fff, inset -1px -1px 0 #808080;"></div>
<div style="left:1204px;top:229px;width:49px;height:16px;background:#d6d3cd;box-shadow:inset 1px 1px 0 #fff, inset -1px -1px 0 #808080;"></div>
<div style="left:1254px;top:229px;width:53px;height:16px;background:#d6d3cd;box-shadow:inset 1px 1px 0 #fff, inset -1px -1px 0 #808080;"></div>
<div style="left:1308px;top:229px;width:41px;height:16px;background:#d6d3cd;box-shadow:inset 1px 1px 0 #fff, inset -1px -1px 0 #808080;"></div>
<div style="left:1350px;top:229px;width:84px;height:16px;background:#d6d3cd;box-shadow:inset 1px 1px 0 #fff, inset -1px -1px 0 #808080;"></div>
<div style="left:1435px;top:229px;width:16px;height:16px;background:#d6d3cd;box-shadow:inset 1px 1px 0 #fff, inset -1px -1px 0 #808080;"></div>
<div style="left:44px;top:245px;width:1407px;height:1px;background:#404040;"></div>
<div style="left:44px;top:246px;width:1407px;height:19px;background:#d6d3cd;"></div>
<div style="left:44px;top:265px;width:1407px;height:1px;background:#404040;"></div>
<div style="left:44px;top:229px;width:1px;height:698px;background:#404040;"></div>
<div style="left:80px;top:229px;width:1px;height:698px;background:#404040;"></div>
<div style="left:191px;top:229px;width:1px;height:698px;background:#404040;"></div>
<div style="left:261px;top:229px;width:1px;height:698px;background:#404040;"></div>
<div style="left:353px;top:229px;width:1px;height:698px;background:#404040;"></div>
<div style="left:431px;top:229px;width:1px;height:698px;background:#404040;"></div>
<div style="left:550px;top:229px;width:1px;height:698px;background:#404040;"></div>
<div style="left:635px;top:229px;width:1px;height:698px;background:#404040;"></div>
<div style="left:712px;top:229px;width:1px;height:698px;background:#404040;"></div>
<div style="left:754px;top:229px;width:1px;height:698px;background:#404040;"></div>
<div style="left:796px;top:229px;width:1px;height:698px;background:#404040;"></div>
<div style="left:838px;top:229px;width:1px;height:698px;background:#404040;"></div>
<div style="left:880px;top:229px;width:1px;height:698px;background:#404040;"></div>
<div style="left:947px;top:229px;width:1px;height:698px;background:#404040;"></div>
<div style="left:1039px;top:229px;width:1px;height:698px;background:#404040;"></div>
<div style="left:1131px;top:229px;width:1px;height:698px;background:#404040;"></div>
<div style="left:1203px;top:229px;width:1px;height:698px;background:#404040;"></div>
<div style="left:1253px;top:229px;width:1px;height:698px;background:#404040;"></div>
<div style="left:1307px;top:229px;width:1px;height:698px;background:#404040;"></div>
<div style="left:1349px;top:229px;width:1px;height:698px;background:#404040;"></div>
<div style="left:1434px;top:229px;width:1px;height:698px;background:#404040;"></div>
<div class="chk" style="left:30px;top:230px;width:13px;height:13px;"></div>
<div class="chk" style="left:30px;top:249px;width:13px;height:13px;"></div>
<svg style="left:48px;top:249px" width="16" height="14" viewBox="0 0 16 14"><defs><linearGradient id="rig" x1="0" x2="0" y1="0" y2="1"><stop offset="0" stop-color="#dbe5f4"/><stop offset="1" stop-color="#9db3d4"/></linearGradient></defs><rect x="0" y="0" width="16" height="13.500" fill="url(#rig)"/><rect x="1.2" y="1.2" width="2" height="2" fill="#ffffff"/><rect x="4.2" y="1.2" width="2" height="2" fill="#ffffff"/><rect x="7.2" y="1.2" width="2" height="2" fill="#ffffff"/><rect x="10.2" y="1.2" width="2" height="2" fill="#ffffff"/><rect x="13.2" y="1.2" width="2" height="2" fill="#ffffff"/><rect x="0.8" y="4.3" width="3" height="2" fill="#f7941a"/><rect x="3.8" y="4.3" width="3" height="2" fill="#f7941a"/><rect x="6.8" y="4.3" width="3" height="2" fill="#f7941a"/><rect x="9.8" y="4.3" width="3" height="2" fill="#f7941a"/><rect x="12.8" y="4.3" width="3" height="2" fill="#f7941a"/><rect x="1.2" y="7.2" width="2" height="2" fill="#ffffff"/><rect x="4.2" y="7.2" width="2" height="2" fill="#ffffff"/><rect x="7.2" y="7.2" width="2" height="2" fill="#ffffff"/><rect x="10.2" y="7.2" width="2" height="2" fill="#ffffff"/><rect x="13.2" y="7.2" width="2" height="2" fill="#ffffff"/><rect x="1.2" y="10.2" width="2" height="2" fill="#ffffff"/><rect x="4.2" y="10.2" width="2" height="2" fill="#ffffff"/><rect x="7.2" y="10.2" width="2" height="2" fill="#ffffff"/><rect x="10.2" y="10.2" width="2" height="2" fill="#ffffff"/><rect x="13.2" y="10.2" width="2" height="2" fill="#ffffff"/></svg>
<span id="t52" class="t" style="left:51px;top:229.0px;height:17px;line-height:17px;font-size:13px;font-weight:700;color:#000;letter-spacing:0.89px;">T...</span>
<span id="t53" class="t" style="left:88px;top:229.0px;height:17px;line-height:17px;font-size:13px;font-weight:700;color:#000;letter-spacing:0.21px;">Budget check...</span>
<span id="t54" class="t" style="left:204px;top:229.0px;height:17px;line-height:17px;font-size:13px;font-weight:700;color:#000;letter-spacing:0.36px;">Line n...</span>
<span id="t55" class="t" style="left:268px;top:229.0px;height:17px;line-height:17px;font-size:13px;font-weight:700;color:#000;letter-spacing:0.31px;">Item numb...</span>
<span id="t56" class="t" style="left:360.6px;top:229.0px;height:17px;line-height:17px;font-size:13px;font-weight:700;color:#000;letter-spacing:-0.02px;">Product ...</span>
<span id="t57" class="t" style="left:438px;top:229.0px;height:17px;line-height:17px;font-size:13px;font-weight:700;color:#000;letter-spacing:0.21px;">Procurement c...</span>
<span id="t58" class="t" style="left:556.8px;top:229.0px;height:17px;line-height:17px;font-size:13px;font-weight:700;color:#000;letter-spacing:0.22px;">Variant n...</span>
<span id="t59" class="t" style="left:642.5px;top:229.0px;height:17px;line-height:17px;font-size:13px;font-weight:700;color:#000;letter-spacing:0.06px;">Configu...</span>
<span id="t60" class="t" style="left:719.8px;top:229.0px;height:17px;line-height:17px;font-size:13px;font-weight:700;color:#000;letter-spacing:0.39px;">Size</span>
<span id="t61" class="t" style="left:761.5px;top:229.0px;height:17px;line-height:17px;font-size:13px;font-weight:700;color:#000;letter-spacing:-0.07px;">Co...</span>
<span id="t62" class="t" style="left:803.7px;top:229.0px;height:17px;line-height:17px;font-size:13px;font-weight:700;color:#000;letter-spacing:0.04px;">St...</span>
<span id="t63" class="t" style="left:845.7px;top:229.0px;height:17px;line-height:17px;font-size:13px;font-weight:700;color:#000;letter-spacing:-0.18px;">Site</span>
<span id="t64" class="t" style="left:887px;top:229.0px;height:17px;line-height:17px;font-size:13px;font-weight:700;color:#000;letter-spacing:0.63px;">Wareh...</span>
<span id="t65" class="t" style="left:954.6px;top:229.0px;height:17px;line-height:17px;font-size:13px;font-weight:700;color:#000;letter-spacing:0.19px;">Batch nu...</span>
<span id="t66" class="t" style="left:1046.4px;top:229.0px;height:17px;line-height:17px;font-size:13px;font-weight:700;color:#000;letter-spacing:0.31px;">Serial nu...</span>
<span id="t67" class="t" style="left:1143.5px;top:229.0px;height:17px;line-height:17px;font-size:13px;font-weight:700;color:#000;letter-spacing:0.33px;">CW qu...</span>
<span id="t68" class="t" style="left:1210px;top:229.0px;height:17px;line-height:17px;font-size:13px;font-weight:700;color:#000;letter-spacing:0.8px;">CW...</span>
<span id="t69" class="t" style="left:1264.5px;top:229.0px;height:17px;line-height:17px;font-size:13px;font-weight:700;color:#000;letter-spacing:0.17px;">Qua...</span>
<span id="t70" class="t" style="left:1314px;top:229.0px;height:17px;line-height:17px;font-size:13px;font-weight:700;color:#000;letter-spacing:0.24px;">Unit</span>
<span id="t71" class="t" style="left:1367.5px;top:229.0px;height:17px;line-height:17px;font-size:13px;font-weight:700;color:#000;letter-spacing:0.06px;">Unit price</span>
<span id="t72" class="t" style="left:1440.8px;top:229.0px;height:17px;line-height:17px;font-size:13px;font-weight:700;color:#000;letter-spacing:0px;">A</span>
<span id="t73" class="t" style="left:244.3px;top:248.0px;height:15px;line-height:15px;font-size:11px;font-weight:400;color:#000;letter-spacing:0px;">10</span>
<span id="t74" class="t" style="left:266.8px;top:248.0px;height:15px;line-height:15px;font-size:11px;font-weight:400;color:#000;letter-spacing:0px;">FIFO</span>
<span id="t75" class="t" style="left:358.8px;top:248.0px;height:15px;line-height:15px;font-size:11px;font-weight:400;color:#000;letter-spacing:0px;">FIFO</span>
<span id="t76" class="t" style="left:844.9px;top:248.0px;height:15px;line-height:15px;font-size:11px;font-weight:400;color:#000;letter-spacing:0px;">1</span>
<span id="t77" class="t" style="left:887.7px;top:248.0px;height:15px;line-height:15px;font-size:11px;font-weight:400;color:#000;letter-spacing:0px;">11</span>
<span id="t78" class="t" style="left:1280.9px;top:248.0px;height:15px;line-height:15px;font-size:11px;font-weight:400;color:#000;letter-spacing:0px;">1.00</span>
<span id="t79" class="t" style="left:1312.6px;top:248.0px;height:15px;line-height:15px;font-size:11px;font-weight:400;color:#000;letter-spacing:0px;">Pcs</span>
<div class="dither" style="left:29px;top:927px;width:1422px;height:16px;"></div>
<div class="sbtn" style="left:29px;top:927px;width:16px;height:16px;"></div>
<div class="sbtn" style="left:1435px;top:927px;width:16px;height:16px;"></div>
<div class="sbtn" style="left:45px;top:927px;width:644px;height:16px;"></div>
<svg style="left:34px;top:930px" width="6" height="9"><polygon points="4.500,.5 4.500,8 .5,4.250" fill="#000"/></svg>
<svg style="left:1440px;top:930px" width="6" height="9"><polygon points="1,.5 1,8 5,4.250" fill="#000"/></svg>
<div style="left:166px;top:316px;width:1124px;height:535px;background:#d4d0c8;box-shadow:inset 1px 1px 0 #d4d0c8, inset -1px -1px 0 #404040, inset 2px 2px 0 #fff, inset -2px -2px 0 #808080;"></div>
<div style="left:170px;top:320px;width:1116px;height:18px;background:#0a246a;"></div>
<span id="t80" class="t" style="left:190.5px;top:321.0px;height:16px;line-height:16px;font-size:12px;font-weight:700;color:#fff;letter-spacing:0.02px;">Inventory transactions (1 - ceu) - Financial date: , Yes, Lot ID: 00161636_068</span>
<svg style="left:171px;top:321px" width="17" height="16" viewBox="0 0 17 16"><rect x=".5" y=".5" width="15" height="12.500" fill="#eef1f8" stroke="#8a93a8" stroke-width=".9"/><rect x="1" y="1" width="14" height="2" fill="#c9d2e6"/><path d="M11 2h1M12.500 2h1" stroke="#5a6784" stroke-width=".8"/><rect x="3" y="4.500" width="7.500" height="5.500" fill="#5b9bdc" stroke="#d4dcec" stroke-width=".5"/><polygon points="3.500,15 5.500,11.500 9.500,5.500 10.500,5.500 10.500,14.500" fill="#f6b820"/><polygon points="3.500,15.300 6,12 5,15.500" fill="#e84a1a"/><rect x="10.500" y="5.500" width="2.500" height="10" fill="#2f74b8"/><rect x="13.500" y="7.500" width="2" height="8.500" fill="#3f9a2a"/></svg>
<div style="left:1234px;top:322px;width:15px;height:14px;background:#d4d0c8;box-shadow:inset 1px 1px 0 #fff, inset -1px -1px 0 #404040, inset -2px -2px 0 #808080;"></div>
<div style="left:1238px;top:331px;width:6px;height:2px;background:#000;"></div>
<div style="left:1249.5px;top:322px;width:15px;height:14px;background:#d4d0c8;box-shadow:inset 1px 1px 0 #fff, inset -1px -1px 0 #404040, inset -2px -2px 0 #808080;"></div>
<div style="left:1252.5px;top:324px;width:9px;height:9px;border:1px solid #000;border-top:2px solid #000;box-sizing:border-box;"></div>
<div style="left:1268px;top:322px;width:15px;height:14px;background:#d4d0c8;box-shadow:inset 1px 1px 0 #fff, inset -1px -1px 0 #404040, inset -2px -2px 0 #808080;"></div>
<svg style="left:1271px;top:324.500px" width="10" height="9"><path d="M.8,.8 L8,7.500 M8,.8 L.8,7.500" stroke="#000" stroke-width="1.600"/></svg>
<div style="left:170px;top:338px;width:1116px;height:25px;background:linear-gradient(#eef5fe,#f8fbff 35%,#ffffff 60%);"></div>
<div style="left:170px;top:338px;width:1116px;height:1px;background:#d4d0c8;"></div>
<div style="left:170px;top:363px;width:1116px;height:1px;background:#8e949c;"></div>
<div style="left:170px;top:364px;width:1116px;height:2px;background:linear-gradient(#d4d8de,#eef3fb);"></div>
<div style="left:170px;top:366px;width:1116px;height:452px;background:#eef5fe;"></div>
<div style="left:170px;top:340px;width:62px;height:23px;border-radius:2px 2px 0 0;background:linear-gradient(#2f62bf 0%,#3a70cc 45%,#3f7cd8 75%,#4a8ee8 100%);box-shadow:inset 1px 1px 0 0 #1a3c9e, inset -1px 0 0 0 #1a3c9e;"></div>
<span id="t81" class="t" style="left:184.6px;top:344.5px;height:15px;line-height:15px;font-size:11px;font-weight:400;color:#fff;letter-spacing:-0.44px;">File</span>
<svg style="left:210px;top:350px" width="12" height="6"><polygon points="2.500,1 9.500,1 6,4.500" fill="#fff"/></svg>
<span id="t82" class="t" style="left:246.5px;top:342.8px;height:16.5px;line-height:16.5px;font-size:12.5px;font-weight:400;color:#000;letter-spacing:-0.12px;">Inventory</span>
<span id="t83" class="t" style="left:326px;top:342.8px;height:16.5px;line-height:16.5px;font-size:12.5px;font-weight:400;color:#000;letter-spacing:-0.39px;">Ledger</span>
<span id="t84" class="t" style="left:391px;top:342.8px;height:16.5px;line-height:16.5px;font-size:12.5px;font-weight:400;color:#000;letter-spacing:-0.28px;">Functions</span>
<span id="t85" class="t" style="left:472.6px;top:342.8px;height:16.5px;line-height:16.5px;font-size:12.5px;font-weight:400;color:#000;letter-spacing:-0.18px;">Configuration details</span>
<svg style="left:298.5px;top:347px" width="8" height="6"><polygon points="0,.5 7.500,.5 3.750,5" fill="#000"/></svg>
<svg style="left:364.5px;top:347px" width="8" height="6"><polygon points="0,.5 7.500,.5 3.750,5" fill="#000"/></svg>
<svg style="left:444.5px;top:347px" width="8" height="6"><polygon points="0,.5 7.500,.5 3.750,5" fill="#000"/></svg>
<svg style="left:1232px;top:344px" width="17" height="15" viewBox="0 0 17 15"><defs><linearGradient id="lyg" x1="0" x2="0" y1="0" y2="1"><stop offset="0" stop-color="#ffffff"/><stop offset="1" stop-color="#a8a8b0"/></linearGradient></defs><rect x=".5" y=".5" width="15" height="13" fill="#fff" stroke="#3c4248" stroke-width="1"/><rect x="1" y="1" width="3.500" height="9" fill="url(#lyg)"/><rect x="1" y="11" width="14" height="2" fill="#c4c4cc"/><path d="M5.500 1v9.500M.5 10.500h15" stroke="#3c4248" stroke-width="1" fill="none"/></svg>
<svg style="left:1259px;top:342px" width="18" height="18" viewBox="0 0 18 18"><circle cx="9" cy="9" r="7.600" fill="#fff" stroke="#8e8e98" stroke-width="1.200"/><circle cx="9" cy="9" r="6.200" fill="url(#helpg)"/><text x="9" y="13.200" font-size="11.500" font-weight="700" text-anchor="middle" fill="#fff" font-family="Liberation Sans, sans-serif">?</text></svg>
<div style="left:178px;top:396px;width:1100px;height:413px;background:#fff;box-shadow:inset 1px 1px 0 #fff, inset -1px -1px 0 #404040, inset 2px 2px 0 #d4d0c8, inset -2px -2px 0 #808080;"></div>
<div style="left:178px;top:375px;width:62px;height:23px;background:#fff;box-shadow:inset 1px 1px 0 #fff,inset 3px 2px 0 #d4d0c8, inset -1px 0 0 #404040, inset -2px 0 0 #808080;border-radius:2px 2px 0 0;"></div>
<span id="t86" class="t" style="left:186.5px;top:378.5px;height:15px;line-height:15px;font-size:11px;font-weight:400;color:#000;letter-spacing:0.09px;">Overview</span>
<div style="left:240px;top:378px;width:47px;height:15px;background:#d9d6d1;box-shadow:inset 1px 1px 0 #fff;border-radius:2px 0 0 0;"></div>
<div style="left:240px;top:393px;width:1px;height:2px;background:#fff;"></div>
<div style="left:285px;top:379px;width:1px;height:16px;background:#808080;"></div>
<div style="left:286px;top:378px;width:1px;height:17px;background:#404040;"></div>
<span id="t87" class="t" style="left:243.5px;top:379.5px;height:15px;line-height:15px;font-size:11px;font-weight:400;color:#000;letter-spacing:-0.36px;">General</span>
<div style="left:287px;top:378px;width:47px;height:15px;background:#d9d6d1;box-shadow:inset 1px 1px 0 #fff;border-radius:2px 0 0 0;"></div>
<div style="left:287px;top:393px;width:1px;height:2px;background:#fff;"></div>
<div style="left:332px;top:379px;width:1px;height:16px;background:#808080;"></div>
<div style="left:333px;top:378px;width:1px;height:17px;background:#404040;"></div>
<span id="t88" class="t" style="left:292px;top:379.5px;height:15px;line-height:15px;font-size:11px;font-weight:400;color:#000;letter-spacing:-0.1px;">Update</span>
<div style="left:334px;top:378px;width:45px;height:15px;background:#d9d6d1;box-shadow:inset 1px 1px 0 #fff;border-radius:2px 0 0 0;"></div>
<div style="left:334px;top:393px;width:1px;height:2px;background:#fff;"></div>
<div style="left:377px;top:379px;width:1px;height:16px;background:#808080;"></div>
<div style="left:378px;top:378px;width:1px;height:17px;background:#404040;"></div>
<span id="t89" class="t" style="left:339px;top:379.5px;height:15px;line-height:15px;font-size:11px;font-weight:400;color:#000;letter-spacing:-0.25px;">Ledger</span>
<div style="left:379px;top:378px;width:62px;height:15px;background:#d9d6d1;box-shadow:inset 1px 1px 0 #fff;border-radius:2px 0 0 0;"></div>
<div style="left:379px;top:393px;width:1px;height:2px;background:#fff;"></div>
<div style="left:439px;top:379px;width:1px;height:16px;background:#808080;"></div>
<div style="left:440px;top:378px;width:1px;height:17px;background:#404040;"></div>
<span id="t90" class="t" style="left:384.4px;top:379.5px;height:15px;line-height:15px;font-size:11px;font-weight:400;color:#000;letter-spacing:-0.17px;">Reference</span>
<div style="left:441px;top:378px;width:42px;height:15px;background:#d9d6d1;box-shadow:inset 1px 1px 0 #fff;border-radius:2px 0 0 0;"></div>
<div style="left:441px;top:393px;width:1px;height:2px;background:#fff;"></div>
<div style="left:481px;top:379px;width:1px;height:16px;background:#808080;"></div>
<div style="left:482px;top:378px;width:1px;height:17px;background:#404040;"></div>
<span id="t91" class="t" style="left:446px;top:379.5px;height:15px;line-height:15px;font-size:11px;font-weight:400;color:#000;letter-spacing:0.07px;">Other</span>
<div style="left:483px;top:378px;width:157px;height:15px;background:#d9d6d1;box-shadow:inset 1px 1px 0 #fff;border-radius:2px 0 0 0;"></div>
<div style="left:483px;top:393px;width:1px;height:2px;background:#fff;"></div>
<div style="left:638px;top:379px;width:1px;height:16px;background:#808080;"></div>
<div style="left:639px;top:378px;width:1px;height:17px;background:#404040;"></div>
<span id="t92" class="t" style="left:488px;top:379.5px;height:15px;line-height:15px;font-size:11px;font-weight:400;color:#000;letter-spacing:-0.23px;">Financial dimensions - financial</span>
<div style="left:640px;top:378px;width:156px;height:15px;background:#d9d6d1;box-shadow:inset 1px 1px 0 #fff;border-radius:2px 0 0 0;"></div>
<div style="left:640px;top:393px;width:1px;height:2px;background:#fff;"></div>
<div style="left:794px;top:379px;width:1px;height:16px;background:#808080;"></div>
<div style="left:795px;top:378px;width:1px;height:17px;background:#404040;"></div>
<span id="t93" class="t" style="left:645px;top:379.5px;height:15px;line-height:15px;font-size:11px;font-weight:400;color:#000;letter-spacing:-0.27px;">Financial dimensions - physical</span>
<div style="left:796px;top:378px;width:115px;height:15px;background:#d9d6d1;box-shadow:inset 1px 1px 0 #fff;border-radius:2px 0 0 0;"></div>
<div style="left:796px;top:393px;width:1px;height:2px;background:#fff;"></div>
<div style="left:909px;top:379px;width:1px;height:16px;background:#808080;"></div>
<div style="left:910px;top:378px;width:1px;height:17px;background:#404040;"></div>
<span id="t94" class="t" style="left:801.5px;top:379.5px;height:15px;line-height:15px;font-size:11px;font-weight:400;color:#000;letter-spacing:-0.05px;">Inventory dimensions</span>
<div style="left:190px;top:405px;width:1076px;height:392px;border:1px solid #c3d4ee;box-sizing:border-box;background:#fff;"></div>
<div style="left:208px;top:424px;width:1056px;height:19px;background:#0a246a;"></div>
<div style="left:208px;top:462px;width:1056px;height:19px;background:#f5f6fe;"></div>
<div style="left:208px;top:500px;width:1056px;height:19px;background:#f5f6fe;"></div>
<div style="left:208px;top:538px;width:1056px;height:19px;background:#f5f6fe;"></div>
<div style="left:208px;top:576px;width:1056px;height:19px;background:#f5f6fe;"></div>
<div style="left:208px;top:614px;width:1056px;height:19px;background:#f5f6fe;"></div>
<div style="left:208px;top:652px;width:1056px;height:19px;background:#f5f6fe;"></div>
<div style="left:208px;top:690px;width:1056px;height:19px;background:#f5f6fe;"></div>
<div style="left:208px;top:728px;width:1056px;height:19px;background:#f5f6fe;"></div>
<div style="left:208px;top:766px;width:1056px;height:13px;background:#f5f6fe;"></div>
<div style="left:208px;top:407px;width:76px;height:16px;background:#d4d0c8;box-shadow:inset 1px 1px 0 #fff, inset -1px -1px 0 #808080;"></div>
<div style="left:285px;top:407px;width:41px;height:16px;background:#d4d0c8;box-shadow:inset 1px 1px 0 #fff, inset -1px -1px 0 #808080;"></div>
<div style="left:327px;top:407px;width:41px;height:16px;background:#d4d0c8;box-shadow:inset 1px 1px 0 #fff, inset -1px -1px 0 #808080;"></div>
<div style="left:369px;top:407px;width:41px;height:16px;background:#d4d0c8;box-shadow:inset 1px 1px 0 #fff, inset -1px -1px 0 #808080;"></div>
<div style="left:411px;top:407px;width:29px;height:16px;background:#d4d0c8;box-shadow:inset 1px 1px 0 #fff, inset -1px -1px 0 #808080;"></div>
<div style="left:441px;top:407px;width:66px;height:16px;background:#d4d0c8;box-shadow:inset 1px 1px 0 #fff, inset -1px -1px 0 #808080;"></div>
<div style="left:508px;top:407px;width:91px;height:16px;background:#d4d0c8;box-shadow:inset 1px 1px 0 #fff, inset -1px -1px 0 #808080;"></div>
<div style="left:600px;top:407px;width:91px;height:16px;background:#d4d0c8;box-shadow:inset 1px 1px 0 #fff, inset -1px -1px 0 #808080;"></div>
<div style="left:692px;top:407px;width:74px;height:16px;background:#d4d0c8;box-shadow:inset 1px 1px 0 #fff, inset -1px -1px 0 #808080;"></div>
<div style="left:767px;top:407px;width:77px;height:16px;background:#d4d0c8;box-shadow:inset 1px 1px 0 #fff, inset -1px -1px 0 #808080;"></div>
<div style="left:845px;top:407px;width:84px;height:16px;background:#d4d0c8;box-shadow:inset 1px 1px 0 #fff, inset -1px -1px 0 #808080;"></div>
<div style="left:930px;top:407px;width:48px;height:16px;background:#d4d0c8;box-shadow:inset 1px 1px 0 #fff, inset -1px -1px 0 #808080;"></div>
<div style="left:979px;top:407px;width:51px;height:16px;background:#d4d0c8;box-shadow:inset 1px 1px 0 #fff, inset -1px -1px 0 #808080;"></div>
<div style="left:1031px;top:407px;width:65px;height:16px;background:#d4d0c8;box-shadow:inset 1px 1px 0 #fff, inset -1px -1px 0 #808080;"></div>
<div style="left:1097px;top:407px;width:99px;height:16px;background:#d4d0c8;box-shadow:inset 1px 1px 0 #fff, inset -1px -1px 0 #808080;"></div>
<div style="left:1197px;top:407px;width:67px;height:16px;background:#d4d0c8;box-shadow:inset 1px 1px 0 #fff, inset -1px -1px 0 #808080;"></div>
<div style="left:208px;top:423px;width:1056px;height:1px;background:#404040;"></div>
<div style="left:208px;top:442px;width:1056px;height:1px;background:#404040;"></div>
<div style="left:207px;top:407px;width:1px;height:372px;background:#404040;"></div>
<div style="left:284px;top:407px;width:1px;height:372px;background:#404040;"></div>
<div style="left:326px;top:407px;width:1px;height:372px;background:#404040;"></div>
<div style="left:368px;top:407px;width:1px;height:372px;background:#404040;"></div>
<div style="left:410px;top:407px;width:1px;height:372px;background:#404040;"></div>
<div style="left:440px;top:407px;width:1px;height:372px;background:#404040;"></div>
<div style="left:507px;top:407px;width:1px;height:372px;background:#404040;"></div>
<div style="left:599px;top:407px;width:1px;height:372px;background:#404040;"></div>
<div style="left:691px;top:407px;width:1px;height:372px;background:#404040;"></div>
<div style="left:766px;top:407px;width:1px;height:372px;background:#404040;"></div>
<div style="left:844px;top:407px;width:1px;height:372px;background:#404040;"></div>
<div style="left:929px;top:407px;width:1px;height:372px;background:#404040;"></div>
<div style="left:978px;top:407px;width:1px;height:372px;background:#404040;"></div>
<div style="left:1030px;top:407px;width:1px;height:372px;background:#404040;"></div>
<div style="left:1096px;top:407px;width:1px;height:372px;background:#404040;"></div>
<div style="left:1196px;top:407px;width:1px;height:372px;background:#404040;"></div>
<div style="left:208px;top:443px;width:1px;height:336px;background:#fff;"></div>
<div style="left:206px;top:443px;width:1px;height:336px;background:#fff;"></div>
<div style="left:285px;top:443px;width:1px;height:336px;background:#fff;"></div>
<div style="left:283px;top:443px;width:1px;height:336px;background:#fff;"></div>
<div style="left:327px;top:443px;width:1px;height:336px;background:#fff;"></div>
<div style="left:325px;top:443px;width:1px;height:336px;background:#fff;"></div>
<div style="left:369px;top:443px;width:1px;height:336px;background:#fff;"></div>
<div style="left:367px;top:443px;width:1px;height:336px;background:#fff;"></div>
<div style="left:411px;top:443px;width:1px;height:336px;background:#fff;"></div>
<div style="left:409px;top:443px;width:1px;height:336px;background:#fff;"></div>
<div style="left:441px;top:443px;width:1px;height:336px;background:#fff;"></div>
<div style="left:439px;top:443px;width:1px;height:336px;background:#fff;"></div>
<div style="left:508px;top:443px;width:1px;height:336px;background:#fff;"></div>
<div style="left:506px;top:443px;width:1px;height:336px;background:#fff;"></div>
<div style="left:600px;top:443px;width:1px;height:336px;background:#fff;"></div>
<div style="left:598px;top:443px;width:1px;height:336px;background:#fff;"></div>
<div style="left:692px;top:443px;width:1px;height:336px;background:#fff;"></div>
<div style="left:690px;top:443px;width:1px;height:336px;background:#fff;"></div>
<div style="left:767px;top:443px;width:1px;height:336px;background:#fff;"></div>
<div style="left:765px;top:443px;width:1px;height:336px;background:#fff;"></div>
<div style="left:845px;top:443px;width:1px;height:336px;background:#fff;"></div>
<div style="left:843px;top:443px;width:1px;height:336px;background:#fff;"></div>
<div style="left:930px;top:443px;width:1px;height:336px;background:#fff;"></div>
<div style="left:928px;top:443px;width:1px;height:336px;background:#fff;"></div>
<div style="left:979px;top:443px;width:1px;height:336px;background:#fff;"></div>
<div style="left:977px;top:443px;width:1px;height:336px;background:#fff;"></div>
<div style="left:1031px;top:443px;width:1px;height:336px;background:#fff;"></div>
<div style="left:1029px;top:443px;width:1px;height:336px;background:#fff;"></div>
<div style="left:1097px;top:443px;width:1px;height:336px;background:#fff;"></div>
<div style="left:1095px;top:443px;width:1px;height:336px;background:#fff;"></div>
<div style="left:1197px;top:443px;width:1px;height:336px;background:#fff;"></div>
<div style="left:1195px;top:443px;width:1px;height:336px;background:#fff;"></div>
<div class="chk" style="left:193px;top:408px;width:13px;height:13px;"></div>
<div style="left:208px;top:424px;width:76px;height:18px;border:1px dotted #fff;box-sizing:border-box;"></div>
<span id="t95" class="t" style="left:213.5px;top:408.5px;height:15px;line-height:15px;font-size:11px;font-weight:400;color:#000;letter-spacing:-0.04px;">Configuration</span>
<span id="t96" class="t" style="left:289.0px;top:408.5px;height:15px;line-height:15px;font-size:11px;font-weight:400;color:#000;letter-spacing:0px;">Size</span>
<span id="t97" class="t" style="left:332.5px;top:408.5px;height:15px;line-height:15px;font-size:11px;font-weight:400;color:#000;letter-spacing:-0.45px;">Color</span>
<span id="t98" class="t" style="left:374.5px;top:408.5px;height:15px;line-height:15px;font-size:11px;font-weight:400;color:#000;letter-spacing:-0.24px;">Style</span>
<span id="t99" class="t" style="left:415.7px;top:408.5px;height:15px;line-height:15px;font-size:11px;font-weight:400;color:#000;letter-spacing:0px;">Site</span>
<span id="t100" class="t" style="left:446.7px;top:408.5px;height:15px;line-height:15px;font-size:11px;font-weight:400;color:#000;letter-spacing:-0.19px;">Warehouse</span>
<span id="t101" class="t" style="left:513.3px;top:408.5px;height:15px;line-height:15px;font-size:11px;font-weight:400;color:#000;letter-spacing:-0.27px;">Batch number</span>
<span id="t102" class="t" style="left:605.4px;top:408.5px;height:15px;line-height:15px;font-size:11px;font-weight:400;color:#000;letter-spacing:-0.37px;">Serial number</span>
<span id="t103" class="t" style="left:697.3px;top:408.5px;height:15px;line-height:15px;font-size:11px;font-weight:400;color:#000;letter-spacing:-0.23px;">Physical date</span>
<span id="t104" class="t" style="left:772.3px;top:408.5px;height:15px;line-height:15px;font-size:11px;font-weight:400;color:#000;letter-spacing:-0.23px;">Financial date</span>
<span id="t105" class="t" style="left:850.6px;top:408.5px;height:15px;line-height:15px;font-size:11px;font-weight:400;color:#000;letter-spacing:-0.17px;">Reference</span>
<span id="t106" class="t" style="left:935.8px;top:408.5px;height:15px;line-height:15px;font-size:11px;font-weight:400;color:#000;letter-spacing:-0.66px;">Number</span>
<span id="t107" class="t" style="left:984.4px;top:408.5px;height:15px;line-height:15px;font-size:11px;font-weight:400;color:#000;letter-spacing:-0.53px;">Receipt</span>
<span id="t108" class="t" style="left:1036.3px;top:408.5px;height:15px;line-height:15px;font-size:11px;font-weight:400;color:#000;letter-spacing:-0.15px;">Issue</span>
<span id="t109" class="t" style="left:1130px;top:408.5px;height:15px;line-height:15px;font-size:11px;font-weight:400;color:#000;letter-spacing:0.01px;">CW quantity</span>
<span id="t110" class="t" style="left:1202px;top:408.5px;height:15px;line-height:15px;font-size:11px;font-weight:400;color:#000;letter-spacing:-0.07px;">CW unit</span>
<span id="t111" class="t" style="left:416.9px;top:426.0px;height:15px;line-height:15px;font-size:11px;font-weight:400;color:#fff;letter-spacing:0px;">1</span>
<span id="t112" class="t" style="left:447.2px;top:426.0px;height:15px;line-height:15px;font-size:11px;font-weight:400;color:#fff;letter-spacing:0px;">11</span>
<span id="t113" class="t" style="left:847.4px;top:426.0px;height:15px;line-height:15px;font-size:11px;font-weight:400;color:#fff;letter-spacing:-0.26px;">Purchase order</span>
<span id="t114" class="t" style="left:935.8px;top:426.0px;height:15px;line-height:15px;font-size:11px;font-weight:400;color:#fff;letter-spacing:-0.18px;">000413</span>
<span id="t115" class="t" style="left:981.5px;top:426.0px;height:15px;line-height:15px;font-size:11px;font-weight:400;color:#fff;letter-spacing:-0.14px;">Ordered</span>
<div class="dither" style="left:192px;top:779px;width:1072px;height:16px;"></div>
<div class="sbtn" style="left:192px;top:779px;width:16px;height:16px;"></div>
<div class="sbtn" style="left:1248px;top:779px;width:16px;height:16px;"></div>
<div class="sbtn" style="left:208px;top:779px;width:808px;height:16px;"></div>
<svg style="left:197px;top:782px" width="6" height="9"><polygon points="4.500,.5 4.500,8 .5,4.250" fill="#000"/></svg>
<svg style="left:1253px;top:782px" width="6" height="9"><polygon points="1,.5 1,8 5,4.250" fill="#000"/></svg>
<div style="left:170px;top:816px;width:1116px;height:1px;background:#f6f9fe;"></div>
<div style="left:170px;top:817px;width:1116px;height:1px;background:#c3cde3;"></div>
<div style="left:170px;top:818px;width:1116px;height:30px;background:linear-gradient(#e6ebf9,#e1e7f6);"></div>
<svg style="left:185px;top:826px" width="14" height="14" viewBox="0 0 14 14"><rect x=".5" y=".5" width="2" height="12.500" fill="#1e8cf0"/><polygon points="12.500,.5 12.500,13 3,6.750" fill="#1e8cf0"/></svg>
<svg style="left:211px;top:826px" width="14" height="14" viewBox="0 0 14 14"><polygon points="12.500,.5 12.500,13 .5,6.750" fill="#1e8cf0"/></svg>
<svg style="left:237px;top:826px" width="14" height="14" viewBox="0 0 14 14"><g fill="#9cc4f2"><rect x="1" y="1" width="3" height="2"/><rect x="5" y="1" width="3" height="2"/><rect x="9" y="1" width="3" height="2"/><rect x="1" y="4" width="3" height="2"/><rect x="5" y="4" width="3" height="2"/><rect x="9" y="4" width="3" height="2"/><rect x="1" y="7" width="3" height="2"/><rect x="5" y="7" width="3" height="2"/><rect x="9" y="7" width="3" height="2"/><rect x="1" y="10" width="3" height="2"/><rect x="5" y="10" width="3" height="2"/><rect x="9" y="10" width="3" height="2"/></g></svg>
<svg style="left:263px;top:826px" width="14" height="14" viewBox="0 0 14 14"><polygon points="1,.5 1,13 13,6.750" fill="#1e8cf0"/></svg>
<svg style="left:287px;top:826px" width="14" height="14" viewBox="0 0 14 14"><polygon points="1,.5 1,13 10.500,6.750" fill="#1e8cf0"/><rect x="11" y=".5" width="2" height="12.500" fill="#1e8cf0"/></svg>
<div style="left:311px;top:821px;width:1px;height:24px;background:linear-gradient(rgba(40,90,160,0),#2a5aa0 25%,#1c4a90 50%,#2a5aa0 75%,rgba(40,90,160,0));"></div>
<div style="left:312px;top:821px;width:1px;height:24px;background:linear-gradient(rgba(255,255,255,0),#f8faff 30%,#f8faff 70%,rgba(255,255,255,0));"></div>
<div style="left:347px;top:821px;width:1px;height:24px;background:linear-gradient(rgba(40,90,160,0),#2a5aa0 25%,#1c4a90 50%,#2a5aa0 75%,rgba(40,90,160,0));"></div>
<div style="left:348px;top:821px;width:1px;height:24px;background:linear-gradient(rgba(255,255,255,0),#f8faff 30%,#f8faff 70%,rgba(255,255,255,0));"></div>
<div style="left:383px;top:821px;width:1px;height:24px;background:linear-gradient(rgba(40,90,160,0),#2a5aa0 25%,#1c4a90 50%,#2a5aa0 75%,rgba(40,90,160,0));"></div>
<div style="left:384px;top:821px;width:1px;height:24px;background:linear-gradient(rgba(255,255,255,0),#f8faff 30%,#f8faff 70%,rgba(255,255,255,0));"></div>
<div style="left:985px;top:821px;width:1px;height:24px;background:linear-gradient(rgba(40,90,160,0),#2a5aa0 25%,#1c4a90 50%,#2a5aa0 75%,rgba(40,90,160,0));"></div>
<div style="left:986px;top:821px;width:1px;height:24px;background:linear-gradient(rgba(255,255,255,0),#f8faff 30%,#f8faff 70%,rgba(255,255,255,0));"></div>
<div style="left:1060px;top:821px;width:1px;height:24px;background:linear-gradient(rgba(40,90,160,0),#2a5aa0 25%,#1c4a90 50%,#2a5aa0 75%,rgba(40,90,160,0));"></div>
<div style="left:1061px;top:821px;width:1px;height:24px;background:linear-gradient(rgba(255,255,255,0),#f8faff 30%,#f8faff 70%,rgba(255,255,255,0));"></div>
<div style="left:1092px;top:821px;width:1px;height:24px;background:linear-gradient(rgba(40,90,160,0),#2a5aa0 25%,#1c4a90 50%,#2a5aa0 75%,rgba(40,90,160,0));"></div>
<div style="left:1093px;top:821px;width:1px;height:24px;background:linear-gradient(rgba(255,255,255,0),#f8faff 30%,#f8faff 70%,rgba(255,255,255,0));"></div>
<div style="left:1119px;top:821px;width:1px;height:24px;background:linear-gradient(rgba(40,90,160,0),#2a5aa0 25%,#1c4a90 50%,#2a5aa0 75%,rgba(40,90,160,0));"></div>
<div style="left:1120px;top:821px;width:1px;height:24px;background:linear-gradient(rgba(255,255,255,0),#f8faff 30%,#f8faff 70%,rgba(255,255,255,0));"></div>
<div style="left:1148px;top:821px;width:1px;height:24px;background:linear-gradient(rgba(40,90,160,0),#2a5aa0 25%,#1c4a90 50%,#2a5aa0 75%,rgba(40,90,160,0));"></div>
<div style="left:1149px;top:821px;width:1px;height:24px;background:linear-gradient(rgba(255,255,255,0),#f8faff 30%,#f8faff 70%,rgba(255,255,255,0));"></div>
<div style="left:318px;top:821px;width:24px;height:24px;background:linear-gradient(#ffe28a,#ffd052);border:1px solid #e0a030;border-radius:3px;box-sizing:border-box;"></div>
<svg style="left:321px;top:824px" width="18" height="18" viewBox="0 0 18 18"><path d="M2,16 L3.500,11.500 L13,2 L16,5 L6.500,14.500 Z" fill="#f4c45a" stroke="#8a6a2a" stroke-width=".8"/><path d="M13,2 L14.500,.8 L17,3.500 L16,5 Z" fill="#e05a5a" stroke="#8a3a3a" stroke-width=".5"/><path d="M2,16 L3.500,11.500 L6.500,14.500 Z" fill="#3a3a3a"/></svg>
<svg style="left:358px;top:825px" width="15" height="17" viewBox="0 0 15 17"><path d="M1.500,3.500 h9 l3,3 v9 h-12 z" fill="#fafafa" stroke="#8e8e8e" stroke-width=".9"/><path d="M5.500,7 v-5 a2,2 0 0 1 4,0 v6 a1.200,1.200 0 0 1 -2.400,0 v-4" fill="none" stroke="#6e6e6e" stroke-width=".9"/></svg>
<span id="t116" class="t" style="left:390.5px;top:826.0px;height:15px;line-height:15px;font-size:11px;font-weight:400;color:#2e2e2e;letter-spacing:-0.02px;">Descriptive name of configuration</span>
<span id="t117" class="t" style="left:1012px;top:826.0px;height:15px;line-height:15px;font-size:11px;font-weight:400;color:#2e2e2e;letter-spacing:0.15px;">(26711)</span>
<span id="t118" class="t" style="left:1065.4px;top:826.0px;height:15px;line-height:15px;font-size:11px;font-weight:400;color:#2e2e2e;letter-spacing:0px;">USD</span>
<span id="t119" class="t" style="left:1098.9px;top:826.0px;height:15px;line-height:15px;font-size:11px;font-weight:400;color:#2e2e2e;letter-spacing:0px;">usr</span>
<span id="t120" class="t" style="left:1126.0px;top:826.0px;height:15px;line-height:15px;font-size:11px;font-weight:400;color:#2e2e2e;letter-spacing:0px;">ceu</span>
<span id="t121" class="t" style="left:1155px;top:826.0px;height:15px;line-height:15px;font-size:11px;font-weight:400;color:#2e2e2e;letter-spacing:0.15px;">initial</span>
<svg style="left:996px;top:825px" width="17" height="17" viewBox="0 0 17 17"><path d="M8,1.500 C4.500,1.500 4,6 3.500,9.500 C3.200,11.500 2,12.500 1,13.500 L15,13.500 C14,12.500 12.800,11.500 12.500,9.500 C12,6 11.500,1.500 8,1.500 Z" fill="#f2b21a" stroke="#b87a0a" stroke-width=".8"/><circle cx="8" cy="14.800" r="1.700" fill="#c88a10"/><path d="M6,3.500 C5,5 4.800,8 4.500,10" stroke="#ffe28a" stroke-width="1.200" fill="none"/></svg>
<div style="left:1196px;top:821px;width:74px;height:24px;background:#d4d0c8;box-shadow:inset 1px 1px 0 #fff, inset -1px -1px 0 #404040, inset -2px -2px 0 #808080;"></div>
<span id="t122" class="t" style="left:1219.5px;top:825.5px;height:15px;line-height:15px;font-size:11px;font-weight:400;color:#000;letter-spacing:-0.48px;">Close</span>
<svg style="left:1272px;top:835px" width="14" height="14" viewBox="0 0 14 14"><path d="M13,2 L2,13 M13,6 L6,13 M13,10 L10,13" stroke="#808080" stroke-width="1.200"/><path d="M13,3.200 L3.200,13 M13,7.200 L7.200,13 M13,11.200 L11.200,13" stroke="#fff" stroke-width=".8"/></svg>
</div>
</body></html>
